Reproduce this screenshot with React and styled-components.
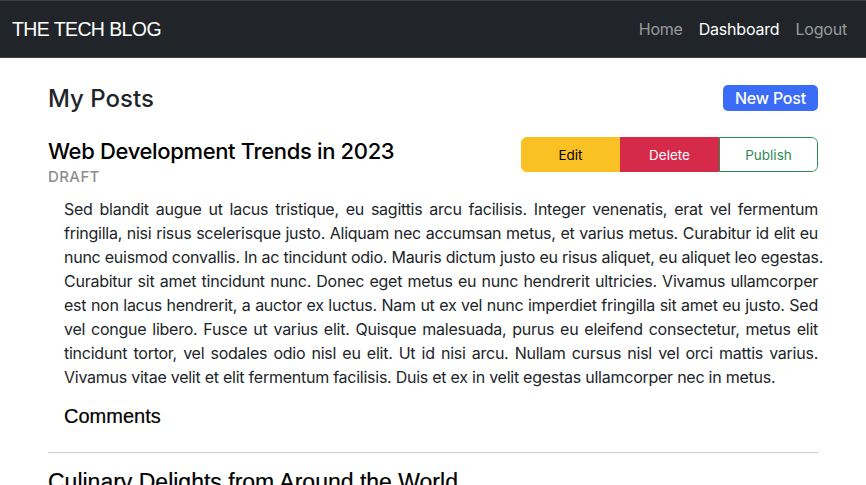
import React from "react";
import styled, { createGlobalStyle } from "styled-components";

const GlobalStyle = createGlobalStyle`
  body {
    margin: 0;
    background: #fff;
    font-family: Inter, "Noto Sans", sans-serif;
    color: #212529;
  }
  * { box-sizing: border-box; }
`;

const Navbar = styled.nav`
  display: flex;
  align-items: center;
  justify-content: space-between;
  height: 58px;
  padding: 0 11px 0 12px;
  background: #212529;
  border-top: 1px solid #3a3f44;
  border-bottom: 1px solid #3a3f44;
`;

const Brand = styled.a`
  font-family: "Liberation Sans", Arial, sans-serif;
  font-size: 19.5px;
  letter-spacing: -0.6px;
  color: #fff;
  text-decoration: none;
`;

const NavLinks = styled.div`
  display: flex;
`;

const NavLink = styled.a`
  padding: 8px 8px;
  font-size: 16px;
  letter-spacing: -0.2px;
  color: ${(p) => (p.$active ? "#fff" : "rgba(255,255,255,0.55)")};
  text-decoration: none;
`;

const Main = styled.main`
  padding: 24px 48px 0;
`;

const HeaderRow = styled.div`
  display: flex;
  align-items: center;
  justify-content: space-between;
  height: 32px;
`;

const PageTitle = styled.h2`
  margin: 0;
  font-size: 24px;
  font-weight: 500;
  color: #212529;
`;

const PrimaryButton = styled.button`
  height: 26px;
  padding: 0 12px;
  border: none;
  border-radius: 5px;
  background: #3b6cf7;
  color: #fff;
  font-family: inherit;
  font-size: 16px;
  font-weight: 500;
  letter-spacing: -0.2px;
`;

const Post = styled.article`
  padding-top: 22px;
  padding-bottom: 24px;
  border-bottom: 1px solid #cccccc;
`;

const PostHead = styled.div`
  display: flex;
  justify-content: space-between;
  align-items: flex-start;
`;

const TitleBlock = styled.div`
  display: flex;
  flex-direction: column;
`;

const PostTitle = styled.h3`
  margin: 0;
  font-size: 22px;
  font-weight: 500;
  letter-spacing: -0.35px;
  line-height: 30px;
  color: #000;
`;

const Status = styled.span`
  margin-top: 1px;
  font-size: 15px;
  font-weight: 500;
  letter-spacing: 0.4px;
  color: #8e8e8e;
  line-height: 20px;
`;

const ButtonGroup = styled.div`
  display: flex;
  margin-top: 1px;
  border-radius: 6px;
  overflow: hidden;
`;

const variants = {
  edit: { bg: "#f9c123", color: "#000", border: "#f9c123" },
  delete: { bg: "#d52a4a", color: "#fff", border: "#d52a4a" },
  publish: { bg: "#fff", color: "#2e8a55", border: "#2e8a55" },
};

const GroupButton = styled.button`
  width: 99px;
  height: 35px;
  font-family: inherit;
  font-size: 13.5px;
  background: ${(p) => variants[p.$variant].bg};
  color: ${(p) => variants[p.$variant].color};
  border: 1px solid ${(p) => variants[p.$variant].border};
  &:last-child {
    border-radius: 0 6px 6px 0;
  }
`;

const Body = styled.div`
  margin-top: 10px;
  padding-left: 16px;
  font-size: 16px;
  letter-spacing: -0.25px;
  line-height: 24px;
  color: #212529;
`;

// one line per row so the wrap points match the original layout
const Line = styled.span`
  display: block;
  white-space: nowrap;
  text-align: justify;
  text-align-last: ${(p) => (p.$last ? "left" : "justify")};
`;

const CommentsTitle = styled.h4`
  margin: 16px 0 0 16px;
  font-family: "Liberation Sans", Arial, sans-serif;
  font-size: 20px;
  font-weight: 400;
  color: #000;
  -webkit-text-stroke: 0.2px #000;
`;

const NextTitle = styled.h3`
  margin: 16px 0 0;
  font-family: "Liberation Sans", Arial, sans-serif;
  font-size: 23px;
  font-weight: 400;
  color: #000;
  -webkit-text-stroke: 0.2px #000;
`;

const lines = [
  "Sed blandit augue ut lacus tristique, eu sagittis arcu facilisis. Integer venenatis, erat vel fermentum",
  "fringilla, nisi risus scelerisque justo. Aliquam nec accumsan metus, et varius metus. Curabitur id elit eu",
  "nunc euismod convallis. In ac tincidunt odio. Mauris dictum justo eu risus aliquet, eu aliquet leo egestas.",
  "Curabitur sit amet tincidunt nunc. Donec eget metus eu nunc hendrerit ultricies. Vivamus ullamcorper",
  "est non lacus hendrerit, a auctor ex luctus. Nam ut ex vel nunc imperdiet fringilla sit amet eu justo. Sed",
  "vel congue libero. Fusce ut varius elit. Quisque malesuada, purus eu eleifend consectetur, metus elit",
  "tincidunt tortor, vel sodales odio nisl eu elit. Ut id nisi arcu. Nullam cursus nisl vel orci mattis varius.",
  "Vivamus vitae velit et elit fermentum facilisis. Duis et ex in velit egestas ullamcorper nec in metus.",
];

export default function App() {
  return (
    <>
      <GlobalStyle />
      <Navbar>
        <Brand href="#">THE TECH BLOG</Brand>
        <NavLinks>
          <NavLink href="#">Home</NavLink>
          <NavLink href="#" $active>
            Dashboard
          </NavLink>
          <NavLink href="#">Logout</NavLink>
        </NavLinks>
      </Navbar>
      <Main>
        <HeaderRow>
          <PageTitle>My Posts</PageTitle>
          <PrimaryButton>New Post</PrimaryButton>
        </HeaderRow>
        <Post>
          <PostHead>
            <TitleBlock>
              <PostTitle>Web Development Trends in 2023</PostTitle>
              <Status>DRAFT</Status>
            </TitleBlock>
            <ButtonGroup>
              <GroupButton $variant="edit">Edit</GroupButton>
              <GroupButton $variant="delete">Delete</GroupButton>
              <GroupButton $variant="publish">Publish</GroupButton>
            </ButtonGroup>
          </PostHead>
          <Body>
            {lines.map((l, i) => (
              <Line key={i} $last={i === lines.length - 1}>
                {l}
              </Line>
            ))}
          </Body>
          <CommentsTitle>Comments</CommentsTitle>
        </Post>
        <NextTitle>Culinary Delights from Around the World</NextTitle>
      </Main>
    </>
  );
}
